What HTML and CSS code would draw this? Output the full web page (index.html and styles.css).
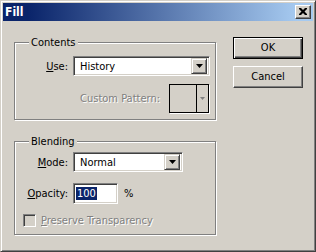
FILE: index.html
```html
<!DOCTYPE html>
<html>
<head>
<meta charset="utf-8">
<link rel="stylesheet" href="styles.css">
</head>
<body>
<div class="window">
  <div class="titlebar">
    <span class="title">Fill</span>
    <span class="close"><svg width="8" height="7" viewBox="0 0 8 7"><path d="M0 0h2l2 2 2-2h2v1l-2.5 2.5 2.5 2.5v1h-2l-2-2-2 2h-2v-1l2.5-2.5-2.5-2.5z" fill="#000"/></svg></span>
  </div>
  <div class="body">
    <div class="groups">
      <fieldset class="group group-contents">
        <legend>Contents</legend>
        <div class="row">
          <span class="lbl"><u>U</u>se:</span>
          <div class="combo combo-use"><span class="value">History</span><span class="drop"><svg width="7" height="4" viewBox="0 0 7 4"><path d="M0 0h7L3.5 4z" fill="#000"/></svg></span></div>
        </div>
        <div class="row pattern-row">
          <span class="lbl-disabled">Custom Pattern:</span>
          <div class="pattern"><span class="swatch"></span><span class="pattern-drop"><svg width="5" height="3" viewBox="0 0 5 3"><path d="M0 0h5L2.5 3z" fill="#808080"/></svg></span></div>
        </div>
      </fieldset>
      <fieldset class="group group-blending">
        <legend>Blending</legend>
        <div class="row">
          <span class="lbl"><u>M</u>ode:</span>
          <div class="combo combo-mode"><span class="value">Normal</span><span class="drop"><svg width="7" height="4" viewBox="0 0 7 4"><path d="M0 0h7L3.5 4z" fill="#000"/></svg></span></div>
        </div>
        <div class="row row-opacity">
          <span class="lbl"><u>O</u>pacity:</span>
          <div class="field"><span class="sel">100</span></div>
          <span class="pct">%</span>
        </div>
        <div class="row row-check">
          <span class="check"></span>
          <span class="lbl-disabled"><u>P</u>reserve Transparency</span>
        </div>
      </fieldset>
    </div>
    <div class="buttons">
      <div class="btn btn-default"><span class="btn-inner">OK</span></div>
      <div class="btn"><span class="btn-inner">Cancel</span></div>
    </div>
  </div>
</div>
</body>
</html>
```

FILE: styles.css
```css
html, body {
  margin: 0;
  padding: 0;
  background: #d4d0c8;
}
body {
  font-family: "DejaVu Sans Condensed", "Liberation Sans", sans-serif;
  font-size: 11px;
  line-height: 13px;
  color: #000;
}
.window {
  width: 316px;
  height: 252px;
  box-sizing: border-box;
  border: 1px solid;
  border-color: #d4d0c8 #404040 #404040 #d4d0c8;
  box-shadow: inset 1px 1px 0 #fff, inset -1px -1px 0 #808080;
  padding: 2px;
  background: #d4d0c8;
}
.titlebar {
  height: 18px;
  background: linear-gradient(90deg, #0a246a 8%, #a6caf0 95%);
  display: flex;
  align-items: flex-start;
  justify-content: space-between;
}
.title {
  color: #fff;
  font-weight: bold;
  padding: 2px 0 0 2px;
  font-size: 12px;
  line-height: 14px;
}
.close {
  width: 16px;
  height: 14px;
  margin: 2px 2px 0 0;
  box-sizing: border-box;
  background: #d4d0c8;
  border: 1px solid;
  border-color: #fff #404040 #404040 #fff;
  box-shadow: inset -1px -1px 0 #808080;
  display: flex;
  align-items: center;
  justify-content: center;
  padding: 0 1px 1px 0;
}
.close svg { display: block; }
.body {
  display: flex;
  padding: 0 0 0 11px;
}
.groups {
  width: 202px;
  padding-top: 15px;
}
.group {
  margin: 0;
  padding: 0;
  border: 1px solid #808080;
  box-shadow: inset 1px 1px 0 #fff, 1px 1px 0 #fff;
  min-width: 0;
}
.group legend {
  margin-left: 14px;
  padding: 0 2px;
  background: #d4d0c8;
  line-height: 13px;
}
.group-contents {
  padding-top: 7px;
  padding-bottom: 6px;
}
.group-blending {
  margin-top: 15px;
  padding-top: 4px;
  padding-bottom: 7px;
}
.row {
  display: flex;
  align-items: center;
}
.lbl {
  width: 53px;
  margin-right: 5px;
  text-align: right;
  white-space: nowrap;
}
.lbl-disabled {
  color: #808080;
  text-shadow: 1px 1px 0 #fff;
  white-space: nowrap;
}
.combo {
  height: 20px;
  box-sizing: border-box;
  background: #fff;
  border: 1px solid;
  border-color: #808080 #fff #fff #808080;
  box-shadow: inset 1px 1px 0 #404040, inset -1px -1px 0 #d4d0c8;
  padding: 2px;
  display: flex;
  align-items: center;
  justify-content: space-between;
}
.combo-use { width: 137px; }
.combo-mode { width: 110px; }
.combo .value {
  padding-left: 4px;
}
.drop {
  width: 16px;
  height: 16px;
  box-sizing: border-box;
  background: #d4d0c8;
  border: 1px solid;
  border-color: #d4d0c8 #404040 #404040 #d4d0c8;
  box-shadow: inset 1px 1px 0 #fff, inset -1px -1px 0 #808080;
  display: flex;
  align-items: center;
  justify-content: center;
}
.drop svg { display: block; }
.pattern-row {
  justify-content: flex-end;
  padding-right: 6px;
  margin-top: 8px;
}
.pattern-row .lbl-disabled {
  margin-right: 9px;
}
.pattern {
  width: 40px;
  height: 29px;
  box-sizing: border-box;
  border: 1px solid #000;
  box-shadow: 1px 1px 0 #fff;
  display: flex;
}
.swatch {
  flex: 1;
  border-right: 1px solid #000;
}
.pattern-drop {
  width: 11px;
  display: flex;
  align-items: center;
  justify-content: center;
}
.pattern-drop svg { display: block; }
.row-opacity {
  margin-top: 11px;
}
.field {
  width: 45px;
  height: 21px;
  box-sizing: border-box;
  background: #fff;
  border: 1px solid;
  border-color: #808080 #fff #fff #808080;
  box-shadow: inset 1px 1px 0 #404040, inset -1px -1px 0 #d4d0c8;
  padding: 3px 2px;
  display: flex;
  align-items: center;
}
.sel {
  background: #0a246a;
  color: #fff;
  padding: 0 1px;
}
.pct {
  margin-left: 6px;
}
.row-check {
  margin-top: 10px;
  padding-left: 8px;
}
.check {
  width: 13px;
  height: 13px;
  box-sizing: border-box;
  border: 1px solid;
  border-color: #808080 #fff #fff #808080;
  box-shadow: inset 1px 1px 0 #404040, inset -1px -1px 0 #d4d0c8;
  background: #d4d0c8;
  margin-right: 5px;
}
.buttons {
  margin-left: 17px;
  padding-top: 16px;
  display: flex;
  flex-direction: column;
  gap: 7px;
}
.btn {
  width: 70px;
  height: 22px;
  box-sizing: border-box;
  border: 1px solid;
  border-color: #fff #404040 #404040 #fff;
  box-shadow: inset -1px -1px 0 #808080;
  display: flex;
  align-items: center;
  justify-content: center;
  padding-bottom: 1px;
}
.btn-default {
  border: 1px solid #000;
  box-shadow: inset 1px 1px 0 #fff, inset -1px -1px 0 #404040, inset -2px -2px 0 #808080;
}
```
